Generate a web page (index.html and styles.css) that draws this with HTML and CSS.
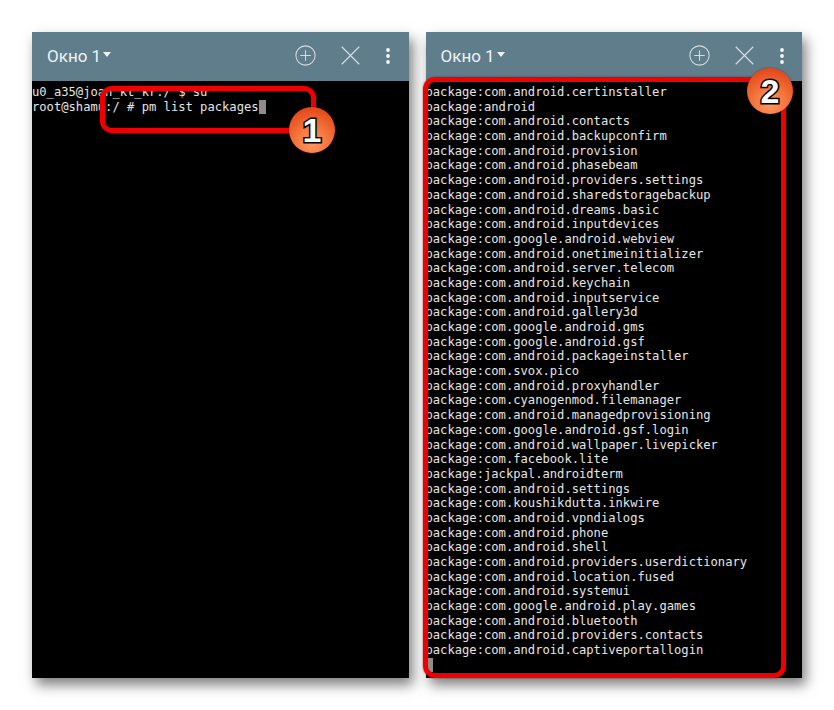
FILE: index.html
```html
<!DOCTYPE html>
<html lang="ru">
<head>
<meta charset="utf-8">
<title>Окно 1</title>
<link rel="stylesheet" href="styles.css">
</head>
<body>
<main class="stage">
  <section class="phone">
    <header class="bar">
      <span class="title">Окно 1</span><span class="caret"></span>
      <div class="actions">
        <svg class="ic ic-plus" viewBox="0 0 24 24"><circle cx="12" cy="12" r="11"/><path d="M12 6v12M6 12h12"/></svg>
        <svg class="ic ic-x" viewBox="0 0 24 24"><path d="M2 2l20 20M22 2L2 22"/></svg>
        <svg class="ic-dots" viewBox="0 0 6 18"><circle cx="3" cy="3" r="1.9"/><circle cx="3" cy="9" r="1.9"/><circle cx="3" cy="15" r="1.9"/></svg>
      </div>
    </header>
    <pre class="term">u0_a35@joan_kt_kr:/ $ su
root@shamu:/ # pm list packages<span class="cursor"></span></pre>
  </section>
  <section class="phone">
    <header class="bar">
      <span class="title">Окно 1</span><span class="caret"></span>
      <div class="actions">
        <svg class="ic ic-plus" viewBox="0 0 24 24"><circle cx="12" cy="12" r="11"/><path d="M12 6v12M6 12h12"/></svg>
        <svg class="ic ic-x" viewBox="0 0 24 24"><path d="M2 2l20 20M22 2L2 22"/></svg>
        <svg class="ic-dots" viewBox="0 0 6 18"><circle cx="3" cy="3" r="1.9"/><circle cx="3" cy="9" r="1.9"/><circle cx="3" cy="15" r="1.9"/></svg>
      </div>
    </header>
    <pre class="term">package:com.android.certinstaller
package:android
package:com.android.contacts
package:com.android.backupconfirm
package:com.android.provision
package:com.android.phasebeam
package:com.android.providers.settings
package:com.android.sharedstoragebackup
package:com.android.dreams.basic
package:com.android.inputdevices
package:com.google.android.webview
package:com.android.onetimeinitializer
package:com.android.server.telecom
package:com.android.keychain
package:com.android.inputservice
package:com.android.gallery3d
package:com.google.android.gms
package:com.google.android.gsf
package:com.android.packageinstaller
package:com.svox.pico
package:com.android.proxyhandler
package:com.cyanogenmod.filemanager
package:com.android.managedprovisioning
package:com.google.android.gsf.login
package:com.android.wallpaper.livepicker
package:com.facebook.lite
package:jackpal.androidterm
package:com.android.settings
package:com.koushikdutta.inkwire
package:com.android.vpndialogs
package:com.android.phone
package:com.android.shell
package:com.android.providers.userdictionary
package:com.android.location.fused
package:com.android.systemui
package:com.google.android.play.games
package:com.android.bluetooth
package:com.android.providers.contacts
package:com.android.captiveportallogin
<span class="cursor"></span></pre>
  </section>
  <div class="mark mark-1"></div>
  <div class="mark mark-2"></div>
  <div class="badge badge-1">1</div>
  <div class="badge badge-2">2</div>
</main>
</body>
</html>
```

FILE: styles.css
```css
* { box-sizing: border-box; }
html, body { margin: 0; height: 100%; background: #fff; overflow: hidden; }
.stage {
  position: relative;
  width: 834px;
  height: 710px;
  padding: 32px 32px 0;
  display: flex;
  gap: 17px;
}
.phone {
  width: 376.5px;
  height: 646px;
  display: flex;
  flex-direction: column;
  background: #000;
  box-shadow: 4px 7px 12px rgba(0, 0, 0, .5);
}
.bar {
  height: 49px;
  flex: none;
  display: flex;
  align-items: center;
  padding: 0 17.5px 2px 15px;
  background: #607d8b;
  color: #eef2f4;
  font-family: "Roboto", sans-serif;
  font-size: 17px;
}
.caret {
  width: 0;
  height: 0;
  margin: -3px 0 0 2px;
  border-left: 4.5px solid transparent;
  border-right: 4.5px solid transparent;
  border-top: 5px solid #eef2f4;
}
.actions { margin-left: auto; display: flex; align-items: center; }
.ic { fill: none; stroke: #d3dde1; width: 21px; height: 21px; }
.ic-plus { stroke-width: 1.2; margin-right: 24px; }
.ic-x { stroke-width: 1.4; margin-right: 24px; }
.ic-dots { width: 6px; height: 18px; fill: #f4f6f7; }
.term {
  margin: 0;
  padding: 4px 0 0;
  color: #e6e6e6;
  font-family: "DejaVu Sans Mono", monospace;
  font-size: 12.15px;
  line-height: 14.68px;
}
.cursor {
  display: inline-block;
  width: 7px;
  height: 14px;
  vertical-align: -3px;
  background: #8c8c8c;
}
.mark {
  position: absolute;
  border: 5px solid #ee0000;
  border-radius: 12px;
  box-shadow: 0 0 2px rgba(120, 0, 0, .7);
}
.mark-1 { left: 100px; top: 86px; width: 216px; height: 47px; }
.mark-2 { left: 423px; top: 77px; width: 363px; height: 601px; }
.badge {
  position: absolute;
  width: 46px;
  height: 46px;
  display: flex;
  align-items: center;
  justify-content: center;
  border-radius: 50%;
  background: radial-gradient(circle at 50% 78%, #ff9a63 0%, #f4743a 40%, #e44a1c 80%, #c93a10 100%);
  box-shadow: 0 0 2px rgba(80, 20, 0, .6);
  color: #fff;
  font-family: "Liberation Sans", sans-serif;
  font-size: 34px;
  font-weight: 700;
  -webkit-text-stroke: 3px #000;
  paint-order: stroke fill;
}
.badge-1 { left: 289px; top: 107px; }
.badge-2 { left: 747px; top: 68px; }
```
